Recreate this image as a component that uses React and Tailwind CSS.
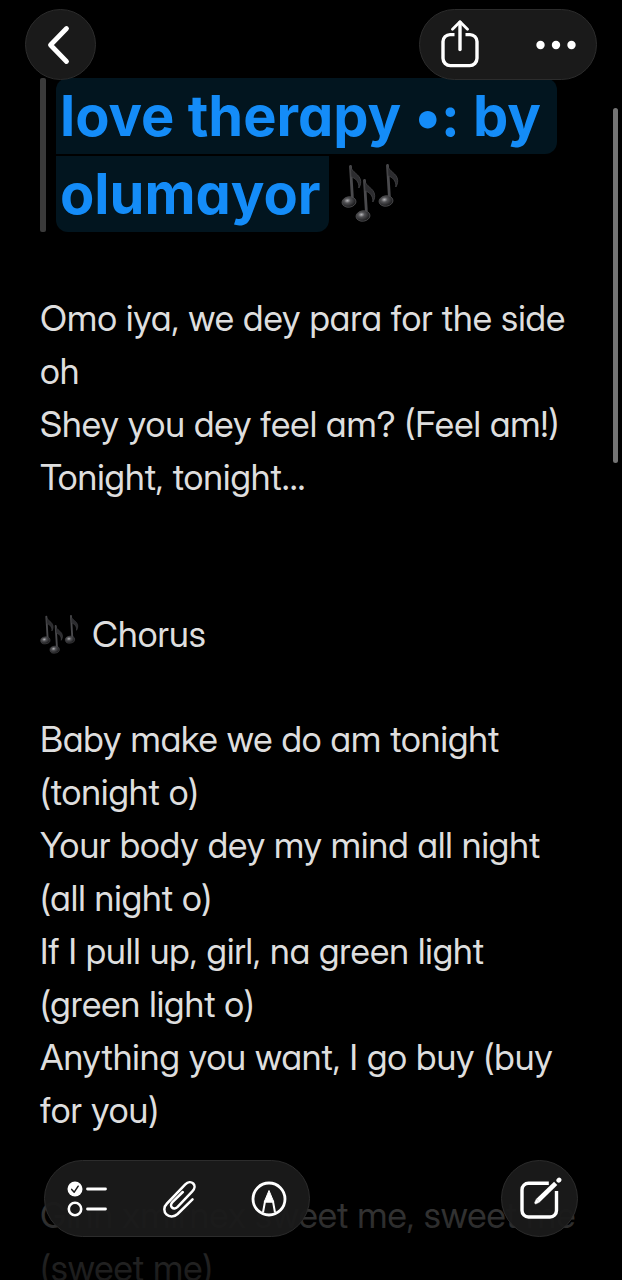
const SONG = [
  {
    gap: "mt-15",
    lines: [
      "Omo iya, we dey para for the side oh",
      "Shey you dey feel am? (Feel am!)",
      "Tonight, tonight...",
    ],
  },
  { gap: "mt-26", notes: true, lines: ["Chorus"] },
  {
    gap: "mt-13",
    lines: [
      "Baby make we do am tonight (tonight o)",
      "Your body dey my mind all night (all night o)",
      "If I pull up, girl, na green light (green light o)",
      "Anything you want, I go buy (buy for you)",
    ],
  },
  {
    gap: "mt-13",
    faded: true,
    lines: ["Ginn xmirnex sweet me, sweet me (sweet me)"],
  },
];

function Note({ x, y }) {
  return (
    <g transform={`translate(${x} ${y})`}>
      <path
        d="M8.500 1.500 10.500 35"
        stroke="#4a4a4d"
        strokeWidth="2.800"
        strokeLinecap="round"
        fill="none"
      />
      <path
        d="M8.500 1c.8 6.500 10 8 10.200 15.500.1 2.500-.8 5-1.900 6.500.8-6-3.800-10.500-7.800-11z"
        fill="#2c2c2f"
        stroke="#454548"
        strokeWidth="0.800"
      />
      <ellipse
        cx="7"
        cy="37"
        rx="7"
        ry="5.200"
        transform="rotate(-8 7 37)"
        fill="url(#noteHead)"
        stroke="#4a4a4d"
        strokeWidth="0.900"
      />
    </g>
  );
}

function MusicNotes({ className }) {
  return (
    <svg viewBox="0 0 60 60" className={className} role="img" aria-label="Musical notes">
      <defs>
        <radialGradient id="noteHead" cx="0.4" cy="0.35" r="0.65">
          <stop offset="0" stopColor="#b8b8bb" />
          <stop offset="0.35" stopColor="#525255" />
          <stop offset="1" stopColor="#161618" />
        </radialGradient>
      </defs>
      <Note x={1} y={1} />
      <Note x={38} y={0} />
      <Note x={15} y={15} />
    </svg>
  );
}

function BackIcon() {
  return (
    <svg viewBox="0 0 24 40" className="h-10 w-6" fill="none" aria-hidden="true">
      <path
        d="M19.500 3.500 3.500 20l16 16.500"
        stroke="#fff"
        strokeWidth="4.800"
        strokeLinecap="round"
        strokeLinejoin="round"
      />
    </svg>
  );
}

function ShareIcon() {
  return (
    <svg
      viewBox="0 1 40 50"
      className="h-[50px] w-10"
      fill="none"
      stroke="#fff"
      strokeWidth="3.400"
      strokeLinecap="round"
      strokeLinejoin="round"
      aria-hidden="true"
    >
      <path
        d="M14.500 15.600H10a7 7 0 0 0-7 7V39.300a7.300 7.300 0 0 0 7.300 7.300h19.400A7.300 7.300 0 0 0 37 39.300V22.600a7 7 0 0 0-7-7h-4.500"
        strokeLinecap="butt"
      />
      <path d="M20 30.500V3.300" />
      <path d="M12.500 10.200 20 2.700 27.500 10.200" strokeWidth="2.800" />
    </svg>
  );
}

function MoreIcon() {
  return (
    <svg viewBox="0 0 40 10" className="h-[10px] w-10" fill="#fff" aria-hidden="true">
      <circle cx="4.500" cy="5" r="4.200" />
      <circle cx="20" cy="5" r="4.200" />
      <circle cx="35.500" cy="5" r="4.200" />
    </svg>
  );
}

function ChecklistIcon() {
  return (
    <svg viewBox="0 0 40 36" className="h-9 w-10" fill="none" aria-hidden="true">
      <circle cx="8" cy="8" r="7.500" fill="#fff" />
      <path
        d="m4.700 8.400 2.500 2.800 4-6"
        stroke="#1a1a1a"
        strokeWidth="1.500"
        strokeLinecap="round"
        strokeLinejoin="round"
      />
      <circle cx="8" cy="28" r="6.200" stroke="#fff" strokeWidth="2.600" />
      <path d="M20.500 8h18M20.500 28h18" stroke="#fff" strokeWidth="2.800" strokeLinecap="round" />
    </svg>
  );
}

function ClipIcon() {
  return (
    <svg
      viewBox="0 0 34 38"
      className="h-[38px] w-[34px]"
      fill="none"
      stroke="#fff"
      strokeWidth="2.500"
      strokeLinecap="round"
      strokeLinejoin="round"
      aria-hidden="true"
    >
      <path d="M30.500 19.300 15.600 34C12 37.300 7.300 37.300 4.400 34.400 1.500 31.500 1.600 26.900 5 23.500L23.300 4.400C26 1.700 29.200 1.500 31.200 3.500s1.800 5.200-.9 7.900L15.600 26.800c-1.900 1.900-4.100 2.200-5.600.7s-1.200-3.700.7-5.600L20.800 12" />
    </svg>
  );
}

function MarkupIcon() {
  return (
    <svg viewBox="0 0 36 36" className="size-9" fill="none" aria-hidden="true">
      <circle cx="18" cy="18" r="16" stroke="#fff" strokeWidth="2.800" />
      <path
        d="M12 31.500 14 20.500h8l2 11"
        stroke="#fff"
        strokeWidth="2"
        strokeLinejoin="round"
      />
      <path d="M18 9.500 22.800 21H13.200z" fill="#fff" stroke="#fff" strokeLinejoin="round" />
    </svg>
  );
}

function ComposeIcon() {
  return (
    <svg viewBox="0 0 44 44" className="size-11" fill="none" stroke="#fff" aria-hidden="true">
      <path
        d="M30.800 6.200H10.500a6.500 6.500 0 0 0-6.500 6.500V33.500a6.500 6.500 0 0 0 6.500 6.500h21.500a6.500 6.500 0 0 0 6.500-6.500V14"
        strokeWidth="3.400"
      />
      <path d="M20 23.500 37.700 6.300" strokeWidth="4.600" />
      <path
        d="m16.800 25.200 1.600-3.300 3.200 3.200-3.400 1.700c-1 .5-1.900-.6-1.400-1.600z"
        fill="#fff"
        strokeWidth="0.500"
        strokeLinejoin="round"
      />
      <path d="m40.700 3.400.4-.4" strokeWidth="4.600" strokeLinecap="round" />
    </svg>
  );
}

function GlassButton({ label, children }) {
  return (
    <button type="button" aria-label={label} className="flex items-center justify-center">
      {children}
    </button>
  );
}

export default function App() {
  return (
    <div className="relative h-screen overflow-hidden bg-black font-['Inter_Display','Inter',sans-serif] text-[#dedede] [font-feature-settings:'cv11']">
      <header className="absolute inset-x-0 top-0 z-10 flex items-center justify-between px-[25px] pt-[9px]">
        <div className="grid size-[71px] rounded-full border border-[#2c2c2c] bg-[#1a1a1a] pr-1">
          <GlassButton label="Back">
            <BackIcon />
          </GlassButton>
        </div>
        <div className="flex h-[71px] items-center gap-14 rounded-full border border-[#2c2c2c] bg-[#1a1a1a] px-5">
          <GlassButton label="Share">
            <ShareIcon />
          </GlassButton>
          <GlassButton label="More">
            <MoreIcon />
          </GlassButton>
        </div>
      </header>

      <main className="pt-[78px] pr-8 pl-10">
        <h1 className="flex font-['Inter',sans-serif] text-[56px] leading-[76px] font-bold text-[#148cf8]">
          <span className="mr-[10px] w-[6px] shrink-0 rounded-xs bg-[#3a3a3a]" />
          <span className="flex flex-col gap-[2px]">
            <span className="w-fit rounded-xl rounded-bl-none bg-[#02151f] pr-4 pl-1 whitespace-nowrap">
              love therapy •: by
            </span>
            <span className="flex items-center gap-3">
              <span className="rounded-b-xl bg-[#02151f] pr-2 pl-1">olumayor</span>
              <MusicNotes className="size-15" />
            </span>
          </span>
        </h1>

        {SONG.map((part) => (
          <section key={part.lines[0]} className={part.gap}>
            {part.lines.map((line) => (
              <p
                key={line}
                className={
                  part.faded
                    ? "text-[36px] leading-[53px] text-[#363636]"
                    : "flex items-center gap-3 text-[36px] leading-[53px]"
                }
              >
                {part.notes && <MusicNotes className="size-10" />}
                {line}
              </p>
            ))}
          </section>
        ))}
      </main>

      <div className="absolute top-[108px] right-1 h-[355px] w-[5px] rounded-full bg-[#747474]" />

      <div className="absolute inset-x-0 bottom-0 h-20 bg-linear-to-t from-black/50 to-transparent" />

      <footer className="absolute inset-x-0 bottom-0 z-10 flex items-center justify-between px-11 pb-[43px]">
        <div className="flex h-[77px] items-center gap-[55px] rounded-full border border-[#2c2c2c] bg-[#1a1a1a]/95 px-[22px]">
          <GlassButton label="Checklist">
            <ChecklistIcon />
          </GlassButton>
          <GlassButton label="Attach">
            <ClipIcon />
          </GlassButton>
          <GlassButton label="Markup">
            <MarkupIcon />
          </GlassButton>
        </div>
        <div className="grid size-[77px] rounded-full border border-[#2c2c2c] bg-[#1a1a1a]/95">
          <GlassButton label="New note">
            <ComposeIcon />
          </GlassButton>
        </div>
      </footer>
    </div>
  );
}
